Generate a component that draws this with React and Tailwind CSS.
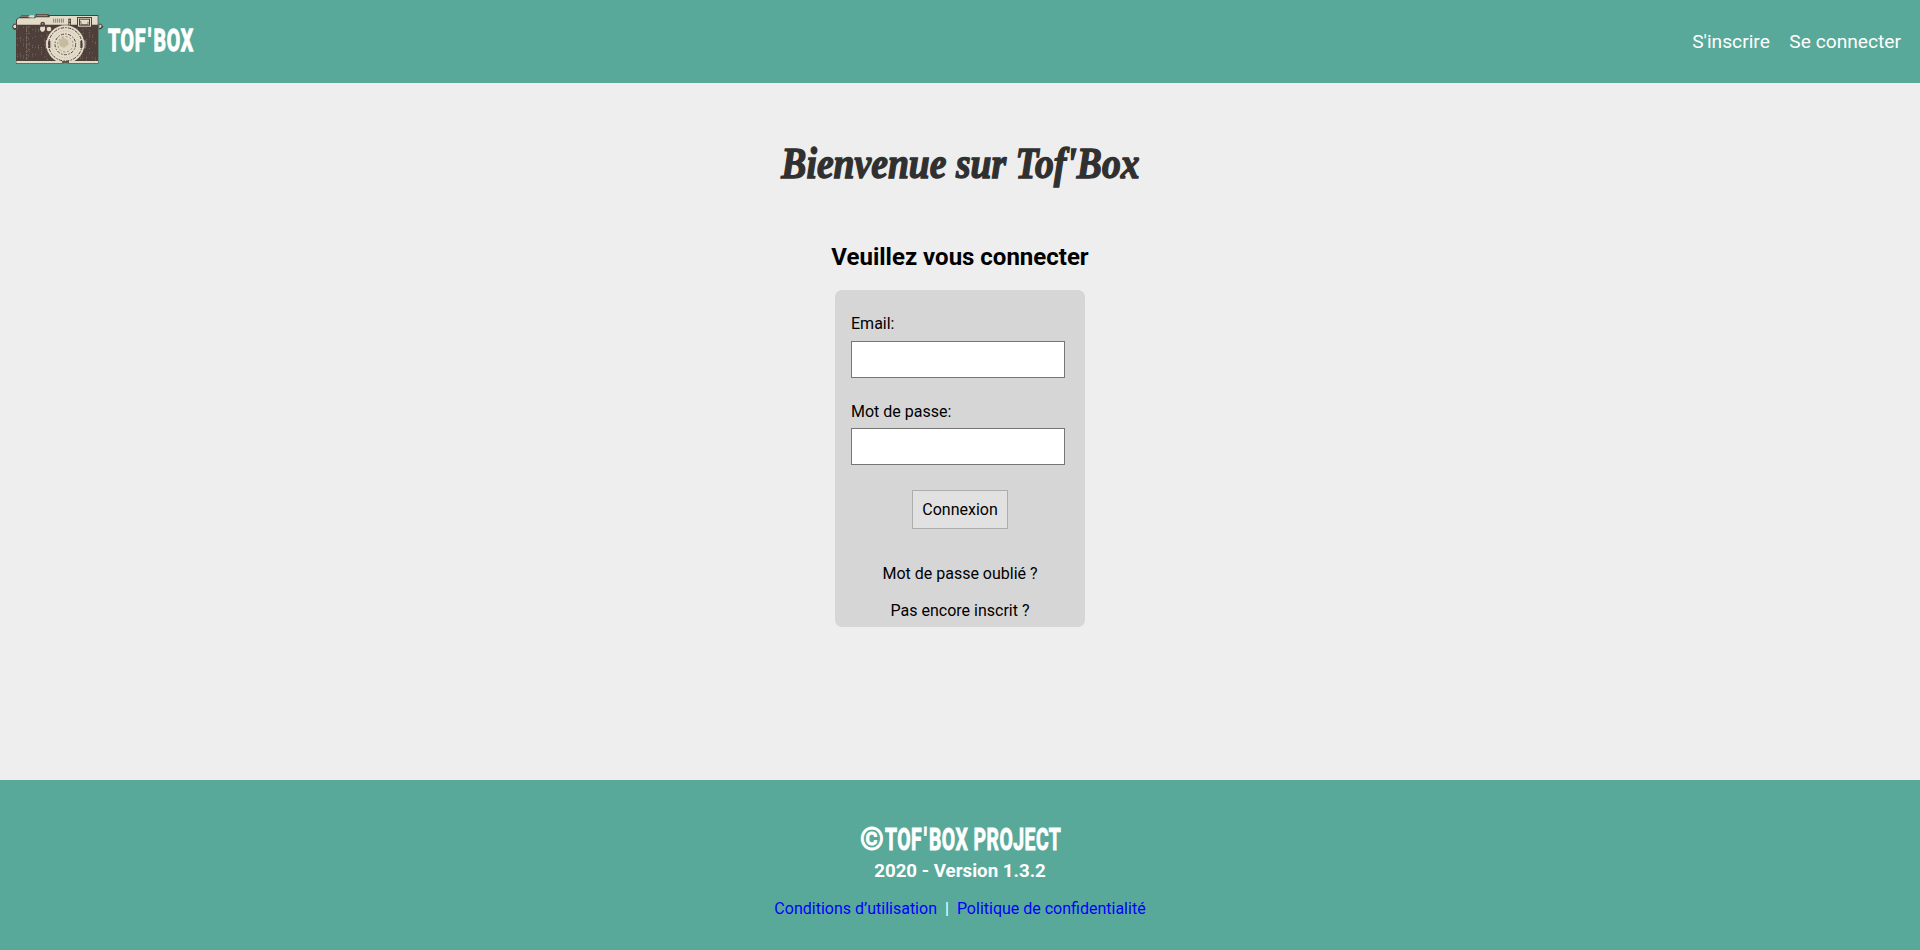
const grain = Array.from({ length: 230 }, (_, i) => {
  const x = 51 + ((i * i * 13 + i * 29) % 81) * 3;
  const y = 78 + ((i * 41 + Math.floor(i / 9) * 7) % 34) * 3;
  return [x, y, i % 3];
});

function Camera() {
  return (
    <svg className="h-[54px] w-[96px] shrink-0" viewBox="30 36 288 162" aria-hidden="true">
      <path d="M58 54v-4h5v-4h26v8zM107 42h37l4 3v8h-41z" fill="#4e3f3a" />
      <path d="M63 47h24v3H63zM110 44h33v6h-33z" fill="#91877e" />
      <path d="M84 52l5-6h13v8z" fill="#e3dcc9" />
      <path d="M36 80l5-9h8v18h-8zM296 71h7l7 9-7 8h-7z" fill="#4e3f3a" />
      <path d="M39 79l4-5h5v10h-6zM298 74h4l3 4-4 6h-3z" fill="#e3dcc9" />
      <path d="M48 60l6-7h48l8-4h37v-4h148v147H48z" fill="#4e3f3a" />
      <path d="M51 60l5-5h48l5-3h40v-4h144v26H51zM49 183h245v7H49z" fill="#e3dcc9" />
      {grain.map(([x, y, k], i) => (
        <rect key={i} x={x} y={y} width="3" height={k === 0 ? 6 : 3} fill={k === 1 ? '#75665e' : '#63534c'} />
      ))}
      <path d="M80 78v101" stroke="#7c6e66" strokeWidth="3" strokeDasharray="5 4 9 3" />
      <path d="M161 56v12m6-12v12m6-12v12m6-12v12m6-12v12m5-12v12" stroke="#8b8074" strokeWidth="3" />
      <path d="M205 56h8v22h-8z" fill="#4e3f3a" />
      <path d="M207 60h4v5h-4zM207 69h4v6h-4z" fill="#a39788" />
      <path d="M231 51h45v32h-45z" fill="#4e3f3a" />
      <path d="M234 54h39v26h-39z" fill="#e3dcc9" />
      <path d="M237 56h33v21h-33z" fill="#4e3f3a" />
      <path d="M240 59h27v15h-27z" fill="#e3dcc9" />
      <path d="M240 65h3v9h21v-9" fill="none" stroke="#4e3f3a" strokeWidth="2" />
      <circle cx="128" cy="72" r="7" fill="#4e3f3a" />
      <circle cx="128" cy="71" r="3" fill="#91877e" />
      <path d="M121 80h14v10l-5 5h-5l-5-6z" fill="#e3dcc9" />
      <circle cx="147" cy="87" r="7" fill="#e3dcc9" />
      <path d="M135 121h12v24h-12zM246 121h11v24h-11z" fill="#e3dcc9" />
      <path d="M137 119v27M255 119v27" stroke="#4e3f3a" strokeWidth="3" />
      <circle cx="196" cy="133" r="57" fill="#e3dcc9" />
      <circle cx="196" cy="133" r="50" fill="none" stroke="#4e3f3a" strokeWidth="3" strokeDasharray="10 3 5 4" />
      <path d="M148 122v22M244 122v22" stroke="#4e3f3a" strokeWidth="6" />
      <path d="M186 186h21" stroke="#4e3f3a" strokeWidth="5" />
      <circle cx="196" cy="133" r="41" fill="none" stroke="#bdb3a0" strokeWidth="2" strokeDasharray="4 4" />
      <circle cx="196" cy="133" r="31" fill="none" stroke="#4e3f3a" strokeWidth="3" strokeDasharray="9 4 4 5" />
      <circle cx="196" cy="133" r="23" fill="none" stroke="#9b8f81" strokeWidth="3" strokeDasharray="7 5" />
      <circle cx="196" cy="133" r="19" fill="#ded6c2" />
      <path d="M178 120l12-7 13 7 3 13-14 10-14-6z" fill="#c6bba0" />
    </svg>
  );
}

function Field({ label, type, className }) {
  return (
    <label className={`block ${className}`}>
      <span className="block leading-[20px]">{label}</span>
      <input type={type} className="block h-[37px] w-[214px] border border-[#767676] bg-white px-2" />
    </label>
  );
}

export default function App() {
  return (
    <div className="flex h-[950px] flex-col bg-[#eeeeee] font-['Roboto',sans-serif] text-base text-black">
      <header className="flex h-[83px] shrink-0 justify-between bg-[#58a99a] pl-[10px] pr-[19px] text-white">
        <a href="#" className="flex pt-[12px]">
          <Camera />
          <span className="ml-[2px] mt-[8px] inline-block w-[84px] whitespace-nowrap text-[32px] font-bold leading-[40px]">
            <span className="inline-block origin-left scale-x-[0.61] tracking-[1.2px] [-webkit-text-stroke:1.3px_white]">
              TO<span className="tracking-[4px]">F'</span>BOX
            </span>
          </span>
        </a>
        <nav className="flex gap-[19.5px] pt-[30px] text-[19.2px] leading-[23px]">
          <a href="#">S'inscrire</a>
          <a href="#">Se connecter</a>
        </nav>
      </header>

      <main className="flex flex-1 flex-col items-center">
        <h1 className="mt-[55px] scale-x-[0.855] whitespace-nowrap font-['Liberation_Serif',serif] text-[44px] font-bold italic leading-[52px] text-[#303030] [-webkit-text-stroke:1.4px_#303030]">
          Bienvenue sur Tof'Box
        </h1>
        <h2 className="mt-[53px] text-[24px] font-bold leading-[28px]">Veuillez vous connecter</h2>
        <form className="mt-[19px] flex h-[337px] w-[250px] flex-col rounded-[7px] bg-[#d6d6d6] px-[16px]">
          <Field label="Email:" type="email" className="mt-[24px] [&>input]:mt-[7px]" />
          <Field label="Mot de passe:" type="password" className="mt-[24px] [&>input]:mt-[6px]" />
          <button type="button" className="mx-auto mt-[25px] h-[39px] w-[96px] border border-[#adadad] bg-[#e1e1e1]">
            Connexion
          </button>
          <a href="#" className="mt-[35px] text-center leading-[20px]">Mot de passe oublié ?</a>
          <a href="#" className="mt-[17px] text-center leading-[20px]">Pas encore inscrit ?</a>
        </form>
      </main>

      <footer className="flex h-[170px] shrink-0 flex-col items-center bg-[#58a99a] text-white">
        <p className="mt-[39px] flex w-[201px] whitespace-nowrap text-[32px] font-bold leading-[40px] [-webkit-text-stroke:1px_white]">
          <span className="w-[25px] shrink-0">
            <span className="inline-block origin-left scale-x-[0.95]">©</span>
          </span>
          <span className="inline-block origin-left scale-x-[0.605] tracking-[0.8px]">
            TO<span className="tracking-[3.5px]">F'</span>BOX PROJECT
          </span>
        </p>
        <p className="mt-px text-[18.72px] font-bold leading-[23px]">2020 - Version 1.3.2</p>
        <p className="mt-[16px] flex gap-[8px] leading-[20px]">
          <a href="#" className="text-[#0000ff]">Conditions d’utilisation</a>
          <span>|</span>
          <a href="#" className="text-[#0000ff]">Politique de confidentialité</a>
        </p>
      </footer>
    </div>
  );
}
